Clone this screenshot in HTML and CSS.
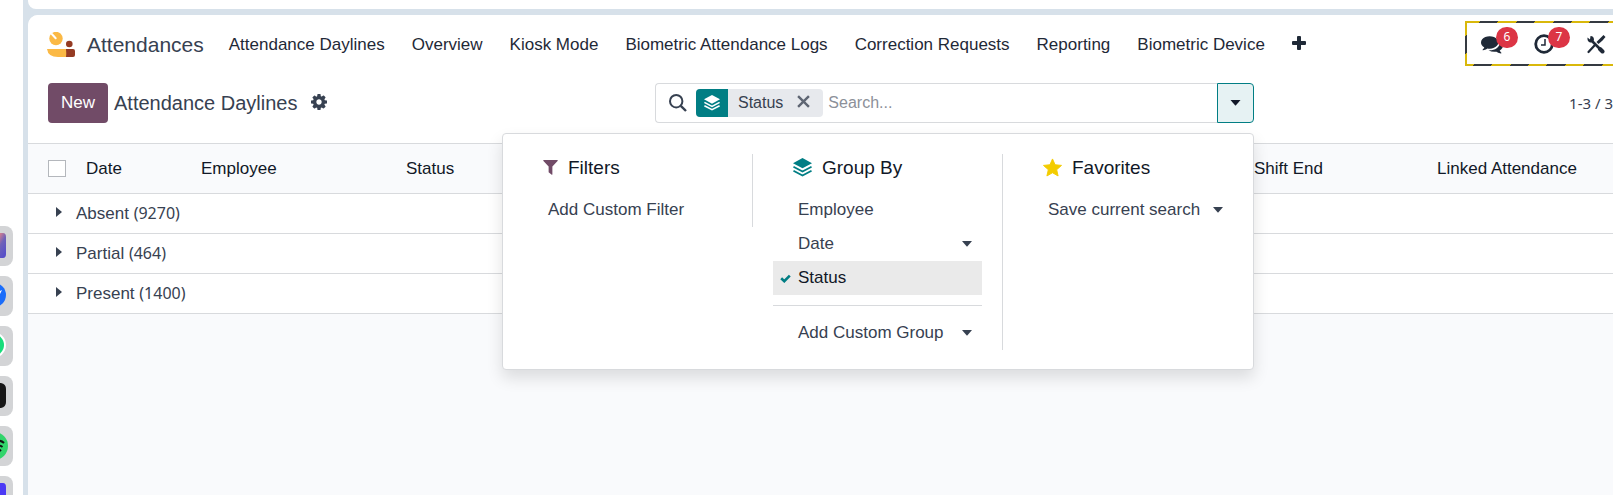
FILE: index.html
```html
<!DOCTYPE html>
<html lang="en">
<head>
<meta charset="utf-8">
<title>Attendance Daylines</title>
<link rel="stylesheet" href="styles.css">
</head>
<body>
<svg class="symbols" aria-hidden="true">
  <symbol id="layers" viewBox="0 0 20 20">
    <path d="M10 0 20 5.400 10 10.800 0 5.400z"/>
    <path d="M.5 9.200 10 14.200 19.500 9.200M.5 13.400 10 18.400 19.500 13.400" fill="none" stroke="currentColor" stroke-width="2"/>
  </symbol>
  <symbol id="caret" viewBox="0 0 10 6"><path d="M0 0H10L5.500 5.200Q5 5.600 4.500 5.200z"/></symbol>
</svg>
<div class="shell">
  <aside class="dock" aria-label="Apps">
    <button class="app" aria-label="Photos"><svg viewBox="0 0 13 40"><defs><linearGradient id="g1" x1="0" y1="0" x2=".4" y2="1"><stop offset="0" stop-color="#d77f8d"/><stop offset=".45" stop-color="#6f62b8"/><stop offset="1" stop-color="#5850c8"/></linearGradient></defs><path d="M0 7H3Q6 7 6 11V28Q6 32 3 32H0z" fill="url(#g1)"/></svg></button>
    <button class="app" aria-label="Browser"><svg viewBox="0 0 13 40"><circle cx="-6" cy="19" r="12" fill="#1b6dfa"/><path d="M0 15 2 14 0 18z" fill="#fff"/></svg></button>
    <button class="app" aria-label="Messages"><svg viewBox="0 0 13 40"><circle cx="-7" cy="19" r="13" fill="#fff"/><circle cx="-7" cy="19" r="11" fill="#18dd7b"/></svg></button>
    <button class="app" aria-label="Terminal"><svg viewBox="0 0 13 40"><path d="M0 7H1Q6 8 6 13V26Q6 31 1 32H0z" fill="#161616"/></svg></button>
    <button class="app" aria-label="Music"><svg viewBox="0 0 13 40"><circle cx="-6" cy="20" r="14" fill="#32d46b"/><path d="M-4 15Q1 14 4 17M-4 20Q0 19 2.500 21M-4 24Q-1 23 1 25" fill="none" stroke="#111" stroke-width="2"/></svg></button>
    <button class="app" aria-label="Notes"><svg viewBox="0 0 13 40"><path d="M0 7H3Q6 7 6 11V32H0z" fill="#4b39f5"/></svg></button>
  </aside>
  <div class="stage">
    <div class="upper"></div>
    <main class="window">
      <header class="nav">
        <a class="brand" href="#">
          <svg class="logo" viewBox="0 0 28 26"><circle cx="9" cy="6.500" r="6.700" fill="#fbb945"/><path d="M4.800 2 8.700 6.200" stroke="#fff" stroke-width="2" stroke-linecap="round"/><circle cx="22.300" cy="12" r="3.300" fill="#953b24"/><path d="M16 17H26Q28 17 28 19V23Q28 25 26 25H16z" fill="#953b24"/><path d="M0 17H19Q19.500 22 19 25H11Q1 25 0 17z" fill="#fbb945"/></svg>
          <span>Attendances</span>
        </a>
        <nav class="menu">
          <a href="#">Attendance Daylines</a><a href="#">Overview</a><a href="#">Kiosk Mode</a><a href="#">Biometric Attendance Logs</a><a href="#">Correction Requests</a><a href="#">Reporting</a><a href="#">Biometric Device</a>
        </nav>
        <button class="more" aria-label="More menus"><svg viewBox="0 0 14 14"><path d="M5 1Q5 0 6 0H8Q9 0 9 1V5H13Q14 5 14 6V8Q14 9 13 9H9V13Q9 14 8 14H6Q5 14 5 13V9H1Q0 9 0 8V6Q0 5 1 5H5z"/></svg></button>
        <div class="tray"><div class="tray-inner">
          <button class="tray-item" aria-label="Messages"><svg viewBox="0 128 1792 1536"><path d="M1408 768q0 139-94 257t-256.500 186.500-353.500 68.500q-86 0-176-16-124 88-278 128-36 9-86 16h-3q-11 0-20.500-8t-11.500-21q-1-3-1-6.500t.5-6.500 2-6l2.500-5 3.500-5.500 4-5 4.500-5 4-4.500q5-6 23-25t26-29.500 22.500-29 25-38.500 20.500-44q-124-72-195-177t-71-224q0-139 94-257t256.500-186.500 353.500-68.500 353.500 68.500 256.500 186.500 94 257zm384 256q0 120-71 224.500t-195 176.500q10 24 20.500 44t25 38.500 22.500 29 26 29.500 23 25q1 1 4 4.500t4.500 5 4 5 3.500 5.500l2.500 5 2 6 .5 6.500-1 6.500q-3 14-13 22t-22 7q-50-7-86-16-154-40-278-128-90 16-176 16-271 0-472-132 58 4 88 4 161 0 309-45t264-129q125-92 192-212t67-254q0-77-23-152 129 71 204 178t75 230z"/></svg><span class="badge">6</span></button>
          <button class="tray-item" aria-label="Activities"><svg viewBox="0 0 22 20"><circle cx="11" cy="10" r="8.300" fill="none" stroke="currentColor" stroke-width="2.800"/><path d="M12 5V11H8" fill="none" stroke="currentColor" stroke-width="1.500"/></svg><span class="badge">7</span></button>
          <button class="tray-item" aria-label="Tools"><svg viewBox="0 0 22 20"><path d="M6 6 16 16" stroke="currentColor" stroke-width="2.600"/><path d="M15 15 17.500 17.500" stroke="currentColor" stroke-width="4" stroke-linecap="round"/><path d="M2.500 3.500 5 5.500 5.500 2Q9 2 9 6Q8 9 5 8.500Q2 7.500 2.500 3.500z"/><path d="M18.500 1 20.500 3 17.500 6.500 13.500 10 11.500 8 15 4.500z"/><path d="M9.500 11.500 3.500 18" stroke="currentColor" stroke-width="2.200" stroke-linecap="round"/></svg></button>
        </div></div>
      </header>
      <section class="control">
        <div class="crumbs">
          <button class="new">New</button>
          <h1>Attendance Daylines</h1>
          <button class="gear" aria-label="Actions"><svg viewBox="0 128 1536 1536"><path d="M1024 896q0-106-75-181t-181-75-181 75-75 181 75 181 181 75 181-75 75-181zm512-109v222q0 12-8 23t-20 13l-185 28q-19 54-39 91 35 50 107 138 10 12 10 25t-9 23q-27 37-99 108t-94 71q-12 0-26-9l-138-108q-44 23-91 38-16 136-29 186-7 28-36 28h-222q-14 0-24.500-8.500t-11.500-21.500l-28-184q-49-16-90-37l-141 107q-10 9-25 9-14 0-25-11-126-114-165-168-7-10-7-23 0-12 8-23 15-21 51-66.500t54-70.500q-27-50-41-99l-183-27q-13-2-21-12.500t-8-23.500v-222q0-12 8-23t19-13l186-28q14-46 39-92-40-57-107-138-10-12-10-24 0-10 9-23 26-36 98.500-107.500t94.500-71.500q13 0 26 10l138 107q44-23 91-38 16-136 29-186 7-28 36-28h222q14 0 24.500 8.500t11.500 21.500l28 184q49 16 90 37l142-107q9-9 24-9 13 0 25 10 129 119 165 170 7 8 7 22 0 12-8 23-15 21-51 66.500t-54 70.500q26 50 41 98l183 28q13 2 21 12.500t8 23.500z"/></svg></button>
        </div>
        <div class="search">
          <div class="search-box">
            <svg class="lens" viewBox="0 0 18 18"><circle cx="7.200" cy="7.200" r="6.200" fill="none" stroke="currentColor" stroke-width="2"/><path d="M11.800 11.800 17 17" stroke="currentColor" stroke-width="2.400"/></svg>
            <div class="facet">
              <span class="facet-icon"><svg><use href="#layers"/></svg></span>
              <span class="facet-label">Status</span>
              <button class="facet-remove" aria-label="Remove"><svg viewBox="0 0 12 12"><path d="M1 1 11 11M11 1 1 11" stroke="currentColor" stroke-width="2.200"/></svg></button>
            </div>
            <input type="text" placeholder="Search..." aria-label="Search">
          </div>
          <button class="toggle" aria-label="Toggle search panel" aria-expanded="true"><svg><use href="#caret"/></svg></button>
          <div class="panel">
            <section class="group filters">
              <h2><svg viewBox="0 0 16 16"><path d="M.5 0H15.500Q16 .5 15.500 1L10 7V15.500Q9.500 16 9 15.500L6 13V7L.5 1Q0 .5 .5 0z"/></svg>Filters</h2>
              <button class="item">Add Custom Filter</button>
            </section>
            <section class="group groupby">
              <h2><svg><use href="#layers"/></svg>Group By</h2>
              <button class="item">Employee</button>
              <button class="item">Date<svg class="caret"><use href="#caret"/></svg></button>
              <button class="item selected"><svg class="check" viewBox="0 0 11 9"><path d="M1.200 4.200 4.300 7.200 9.800 1.600" fill="none" stroke="currentColor" stroke-width="2.600"/></svg>Status</button>
              <hr>
              <button class="item">Add Custom Group<svg class="caret"><use href="#caret"/></svg></button>
            </section>
            <section class="group favorites">
              <h2><svg viewBox="0 0 20 19"><path d="M10 .5 12.700 6.600 19.500 7.300 14.400 11.800 15.900 18.400 10 15 4.100 18.400 5.600 11.800 .5 7.300 7.300 6.600z" stroke="currentColor" stroke-linejoin="round"/></svg>Favorites</h2>
              <button class="item">Save current search<svg class="caret"><use href="#caret"/></svg></button>
            </section>
          </div>
        </div>
        <div class="pager">1-3 / 3</div>
      </section>
      <table class="list">
        <colgroup><col class="c-check"><col class="c-date"><col class="c-employee"><col class="c-status"><col class="c-shift"><col class="c-linked"></colgroup>
        <thead><tr><th><input type="checkbox" aria-label="Select all"></th><th>Date</th><th>Employee</th><th>Status</th><th>Shift End</th><th>Linked Attendance</th></tr></thead>
        <tbody>
          <tr><td colspan="6"><svg class="fold" viewBox="0 0 6 10"><path d="M0 0 6 5 0 10z"/></svg>Absent <span class="count">(9270)</span></td></tr>
          <tr><td colspan="6"><svg class="fold" viewBox="0 0 6 10"><path d="M0 0 6 5 0 10z"/></svg>Partial <span class="count">(464)</span></td></tr>
          <tr><td colspan="6"><svg class="fold" viewBox="0 0 6 10"><path d="M0 0 6 5 0 10z"/></svg>Present <span class="count">(1400)</span></td></tr>
        </tbody>
      </table>
    </main>
  </div>
</div>
</body>
</html>
```
FILE: styles.css
```css
* { box-sizing: border-box; }
body {
  margin: 0;
  font: 17px/24px "Liberation Sans", Arial, sans-serif;
  color: #374151;
  background: #fff;
}
a { color: inherit; text-decoration: none; }
button {
  font: inherit;
  color: inherit;
  background: none;
  border: 0;
  padding: 0;
}
svg { fill: currentColor; display: block; flex: none; }
.symbols { position: absolute; width: 0; height: 0; }

.shell { display: flex; height: 100vh; overflow: hidden; }
.dock {
  flex: 0 0 23px;
  padding-top: 226px;
  display: flex;
  flex-direction: column;
  gap: 10px;
}
.app {
  flex: none;
  width: 13px;
  height: 40px;
  background: #d3d4d6;
  border-radius: 0 8px 8px 0;
  overflow: hidden;
}
.app svg { width: 13px; height: 40px; }

.stage {
  flex: 1;
  min-width: 0;
  display: flex;
  flex-direction: column;
  gap: 6px;
  padding-left: 5px;
  background: #d7e1ea;
}
.upper { height: 9px; background: #fff; border-bottom-left-radius: 8px; }
.window {
  flex: 1;
  background: #f9fafc;
  border-top-left-radius: 10px;
}

.nav {
  display: flex;
  align-items: center;
  height: 60px;
  padding-left: 19px;
  background: #fff;
  border-top-left-radius: 10px;
  white-space: nowrap;
  color: #1f2937;
}
.brand { display: flex; align-items: center; gap: 12px; font-size: 21px; color: #374151; }
.logo { width: 28px; height: 26px; }
.menu { display: flex; gap: 27px; margin-left: 25px; }
.more { margin-left: 27px; padding-bottom: 4px; }
.more svg { width: 14px; height: 14px; }
.tray {
  align-self: flex-start;
  margin: 6px 0 0 auto;
  padding: 2px 0 2px 2px;
  background: repeating-linear-gradient(135deg, #d9b80b 0 11px, #353a41 11px 24px, #d9b80b 24px 26px);
}
.tray-inner {
  display: flex;
  gap: 30px;
  height: 41px;
  padding: 0 6px 0 14px;
  align-items: center;
  background: #fff;
}
.tray-item { position: relative; }
.tray-item svg { width: 22px; height: 20px; }
.badge {
  position: absolute;
  left: 15px;
  top: -7px;
  width: 22px;
  height: 21px;
  border-radius: 11px;
  background: #dc3545;
  color: #fff;
  font: 12px/20px "Noto Sans", sans-serif;
}

.control {
  display: grid;
  grid-template-columns: 607fr 599fr 359fr;
  align-items: center;
  height: 68px;
  padding: 0 0 12px 20px;
  background: #fff;
}
.crumbs { display: flex; align-items: center; white-space: nowrap; }
.new {
  height: 40px;
  padding: 0 13px;
  border-radius: 4px;
  background: #714b67;
  color: #fff;
}
h1 { margin: 0 14px 0 6px; font-size: 20px; font-weight: 400; }
.gear { padding-bottom: 3px; }
.gear svg { width: 16px; height: 16px; }

.search { position: relative; display: flex; height: 40px; }
.search-box {
  flex: 1;
  min-width: 0;
  display: flex;
  align-items: center;
  padding-left: 13px;
  border: 1px solid #d8dadd;
  border-right: 0;
  border-radius: 4px 0 0 4px;
  font-size: 16px;
}
.lens { width: 18px; height: 18px; margin-right: 9px; }
.facet {
  display: flex;
  align-items: center;
  height: 28px;
  border-radius: 4px;
  background: #e7e9ed;
  overflow: hidden;
}
.facet-icon { padding: 6px 8px; background: #017e84; color: #fff; }
.facet-icon svg { width: 16px; height: 16px; }
.facet-label { padding: 0 14px 0 10px; }
.facet-remove { padding: 0 13px 3px 0; color: #5f6673; }
.facet-remove svg { width: 13px; height: 13px; }
.search input {
  flex: 1;
  min-width: 0;
  border: 0;
  outline: 0;
  padding: 0 5px;
  font: inherit;
  background: none;
}
.search input::placeholder { color: #8c9099; }
.toggle {
  width: 37px;
  display: flex;
  align-items: center;
  justify-content: center;
  border: 1px solid #017e84;
  border-radius: 0 4px 4px 0;
  background: #e6f2f3;
  color: #111827;
}
.toggle svg { width: 11px; height: 6px; }

.panel {
  position: absolute;
  z-index: 2;
  top: 50px;
  right: 0;
  width: 752px;
  display: grid;
  grid-template-columns: 1fr 1fr 1fr;
  align-items: start;
  padding: 20px 0 19px;
  border: 1px solid #d8dadd;
  border-radius: 4px;
  background: #fff;
  box-shadow: 0 8px 16px rgba(0, 0, 0, .12);
}
.group { padding: 0 20px; border-right: 1px solid #d8dadd; }
.favorites { border-right: 0; }
h2 {
  display: flex;
  align-items: center;
  gap: 10px;
  height: 27px;
  margin: 0 0 12px;
  padding-left: 20px;
  font-size: 19px;
  font-weight: 400;
  color: #111827;
}
h2 svg { width: 19px; height: 19px; }
.filters h2 svg { width: 15px; height: 15px; color: #714b67; }
.groupby h2 svg { color: #017e84; }
.favorites h2 svg { color: #f3cc00; }
.item {
  position: relative;
  display: flex;
  align-items: center;
  width: 100%;
  height: 34px;
  padding: 0 10px 0 25px;
  white-space: nowrap;
}
.caret { width: 10px; height: 6px; margin-left: auto; }
.selected { background: #eaeaea; color: #111827; }
.check { position: absolute; left: 7px; width: 11px; height: 9px; color: #017e84; }
hr { margin: 10px 0; border: 0; border-top: 1px solid #d8dadd; }

.pager { text-align: right; font-family: "Noto Sans", sans-serif; font-size: 15px; }

.list { width: 100%; table-layout: fixed; border-collapse: collapse; }
.c-check { width: 58px; }
.c-date { width: 115px; }
.c-employee { width: 205px; }
.c-shift { width: 183px; }
.c-linked { width: 176px; }
th {
  height: 50px;
  padding: 0;
  border: 1px solid #d8dadd;
  border-width: 1px 0;
  text-align: left;
  font-weight: 400;
  color: #111827;
  white-space: nowrap;
}
th input {
  appearance: none;
  display: block;
  width: 18px;
  height: 17px;
  margin: 0 0 0 20px;
  border: 1px solid #b4b7bc;
  background: #fff;
}
td {
  height: 40px;
  padding: 0 0 0 28px;
  border-bottom: 1px solid #d8dadd;
  background: #fff;
}
.count { font-family: "Noto Sans", sans-serif; font-size: 16px; }
.fold { display: inline-block; width: 6px; height: 10px; margin-right: 14px; vertical-align: 2px; }
```
